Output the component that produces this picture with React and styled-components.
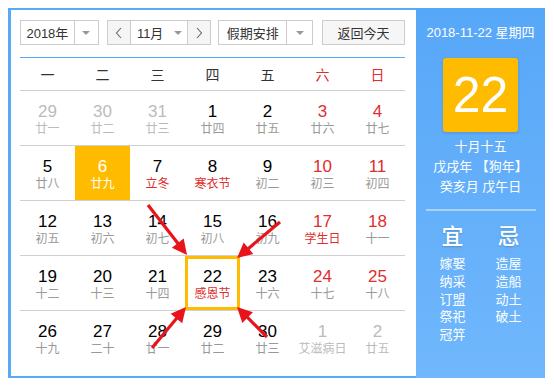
import styled, { createGlobalStyle } from "styled-components";

const GlobalStyle = createGlobalStyle`
  body {
    margin: 8px;
    font-family: "Liberation Sans", "Noto Sans CJK SC", sans-serif;
    background: #fff;
  }
`;

const RED = "#e02d2d";
const YELLOW = "#ffbb00";
const BLUE = "#5aa9f7";

const Wrapper = styled.div`
  position: relative;
  display: flex;
  width: 537px;
  height: 370px;
`;

const Main = styled.div`
  width: 408px;
  box-sizing: border-box;
  border: solid ${BLUE};
  border-width: 2px 0 2px 3px;
  padding: 10px 11px 0 9px;
  background: #fff;
`;

const Toolbar = styled.div`
  display: flex;
  height: 25px;
  padding-bottom: 12px;
  border-bottom: 1px solid ${BLUE};
`;

const Select = styled.div`
  display: flex;
  width: ${(p) => p.width}px;
  margin-right: ${(p) => p.gap || 0}px;
  box-sizing: border-box;
  border: 1px solid #ccc;
  background: #fff;
  font-size: 13px;
  color: #333;
`;

const SelectText = styled.div`
  flex: 1;
  display: flex;
  align-items: center;
  justify-content: center;
`;

const SelectArrow = styled.div`
  width: ${(p) => p.width || 23}px;
  display: flex;
  align-items: center;
  justify-content: center;
  border-left: ${(p) => (p.noLine ? "none" : "1px solid #ccc")};
  &::after {
    content: "";
    border-left: 4px solid transparent;
    border-right: 4px solid transparent;
    border-top: 4px solid #999;
  }
`;

const NavBtn = styled.div`
  width: 22px;
  display: flex;
  align-items: center;
  justify-content: center;
  background: #f5f5f5;
  border-${(p) => p.side}: 1px solid #ccc;
  color: #555;
`;

const TodayBtn = styled.div`
  width: 83px;
  box-sizing: border-box;
  border: 1px solid #ccc;
  background: #f6f6f6;
  display: flex;
  align-items: center;
  justify-content: center;
  font-size: 13px;
  color: #333;
`;

const Grid = styled.div`
  width: 385px;
`;

const HeadRow = styled.div`
  display: grid;
  grid-template-columns: repeat(7, 55px);
  height: 33px;
  box-sizing: border-box;
  border-bottom: 1px solid #d0d0d0;
`;

const HeadCell = styled.div`
  display: flex;
  align-items: center;
  justify-content: center;
  font-size: 14px;
  color: ${(p) => (p.weekend ? RED : "#333")};
`;

const Week = styled.div`
  display: grid;
  grid-template-columns: repeat(7, 55px);
  height: 55px;
  box-sizing: border-box;
  border-bottom: 1px solid #d0d0d0;
  &:last-child {
    border-bottom: none;
    height: 54px;
  }
`;

const Cell = styled.div`
  display: flex;
  flex-direction: column;
  align-items: center;
  justify-content: center;
  padding-top: 2px;
  box-sizing: border-box;
  background: ${(p) => (p.selected ? YELLOW : "transparent")};
  border: ${(p) => (p.today ? `3px solid ${YELLOW}` : "none")};
`;

const Num = styled.div`
  font-size: 17px;
  line-height: 19px;
  color: ${(p) =>
    p.selected ? "#fff" : p.other ? "#bbb" : p.weekend ? RED : "#000"};
`;

const Lunar = styled.div`
  font-size: 12px;
  line-height: 16px;
  color: ${(p) =>
    p.selected ? "#fff" : p.other ? "#bbb" : p.fest ? RED : "#999"};
`;

const Side = styled.div`
  width: 129px;
  height: 370px;
  background: linear-gradient(#57a7f8, #70b7fc);
  display: flex;
  flex-direction: column;
  align-items: center;
  color: #fff;
  padding-top: 16px;
  box-sizing: border-box;
`;

const SideDate = styled.div`
  font-size: 13px;
  line-height: 18px;
`;

const BigDay = styled.div`
  width: 75px;
  height: 74px;
  margin-top: 16px;
  border-radius: 3px;
  background: ${YELLOW};
  box-shadow: 0 1px 3px rgba(0, 0, 0, 0.15);
  display: flex;
  align-items: center;
  justify-content: center;
  font-size: 50px;
  font-family: "Liberation Sans", Arial, sans-serif;
`;

const LunarInfo = styled.div`
  margin-top: 5px;
  font-size: 13px;
  line-height: 20px;
  text-align: center;
`;

const Divider = styled.div`
  width: 110px;
  height: 2px;
  margin-top: 12px;
  background: rgba(255, 255, 255, 0.45);
`;

const Advice = styled.div`
  display: grid;
  grid-template-columns: 56px 56px;
  margin-top: 14px;
`;

const AdviceCol = styled.div`
  display: flex;
  flex-direction: column;
  align-items: center;
`;

const AdviceTitle = styled.div`
  font-size: 22px;
  line-height: 24px;
  font-weight: 500;
  margin-bottom: 6px;
  text-shadow: 0 1px 2px rgba(0, 0, 0, 0.2);
`;

const AdviceItem = styled.div`
  font-size: 13px;
  line-height: 17.8px;
`;

const Overlay = styled.svg`
  position: absolute;
  left: 0;
  top: 0;
  pointer-events: none;
`;

const weekdays = ["一", "二", "三", "四", "五", "六", "日"];

// [day, lunar, flags]
const weeks = [
  [["29", "廿一", "o"], ["30", "廿二", "o"], ["31", "廿三", "o"], ["1", "廿四"], ["2", "廿五"], ["3", "廿六"], ["4", "廿七"]],
  [["5", "廿八"], ["6", "廿九", "s"], ["7", "立冬", "f"], ["8", "寒衣节", "f"], ["9", "初二"], ["10", "初三"], ["11", "初四"]],
  [["12", "初五"], ["13", "初六"], ["14", "初七"], ["15", "初八"], ["16", "初九"], ["17", "学生日", "f"], ["18", "十一"]],
  [["19", "十二"], ["20", "十三"], ["21", "十四"], ["22", "感恩节", "ft"], ["23", "十六"], ["24", "十七"], ["25", "十八"]],
  [["26", "十九"], ["27", "二十"], ["28", "廿一"], ["29", "廿二"], ["30", "廿三"], ["1", "艾滋病日", "o"], ["2", "廿五", "o"]],
];

const arrows = [
  [148, 205, 187, 255],
  [280, 222, 237, 258],
  [152, 348, 186, 307],
  [267, 337, 237, 307],
];

function Arrow({ x1, y1, x2, y2 }) {
  const dx = x2 - x1;
  const dy = y2 - y1;
  const len = Math.hypot(dx, dy);
  const ux = dx / len;
  const uy = dy / len;
  const L = 15;
  const W = 7.5;
  const bx = x2 - ux * L;
  const by = y2 - uy * L;
  const pts = `${x2},${y2} ${bx - uy * W},${by + ux * W} ${bx + uy * W},${by - ux * W}`;
  return (
    <g fill="#e8141c" stroke="#e8141c">
      <line x1={x1} y1={y1} x2={bx + ux * 2} y2={by + uy * 2} strokeWidth="3.2" />
      <polygon points={pts} strokeWidth="0" />
    </g>
  );
}

function Chevron({ dir }) {
  return (
    <svg width="8" height="12" viewBox="0 0 8 12">
      <polyline
        points={dir === "l" ? "6,1 1.5,6 6,11" : "2,1 6.5,6 2,11"}
        fill="none"
        stroke="#666"
        strokeWidth="1.1"
      />
    </svg>
  );
}

function App() {
  return (
    <>
      <GlobalStyle />
      <Wrapper>
        <Main>
          <Toolbar>
            <Select width={79} gap={8}>
              <SelectText>2018年</SelectText>
              <SelectArrow />
            </Select>
            <Select width={105} gap={7}>
              <NavBtn side="right">
                <Chevron dir="l" />
              </NavBtn>
              <SelectText>11月</SelectText>
              <SelectArrow width={18} noLine />
              <NavBtn side="left">
                <Chevron dir="r" />
              </NavBtn>
            </Select>
            <Select width={95} gap={9}>
              <SelectText>假期安排</SelectText>
              <SelectArrow width={25} />
            </Select>
            <TodayBtn>返回今天</TodayBtn>
          </Toolbar>
          <Grid>
            <HeadRow>
              {weekdays.map((w, i) => (
                <HeadCell key={w} weekend={i > 4}>
                  {w}
                </HeadCell>
              ))}
            </HeadRow>
            {weeks.map((week, wi) => (
              <Week key={wi}>
                {week.map(([d, l, f = ""], i) => {
                  const other = f.includes("o");
                  const selected = f.includes("s");
                  return (
                    <Cell key={i} selected={selected} today={f.includes("t")}>
                      <Num other={other} selected={selected} weekend={i > 4}>
                        {d}
                      </Num>
                      <Lunar other={other} selected={selected} fest={f.includes("f")}>
                        {l}
                      </Lunar>
                    </Cell>
                  );
                })}
              </Week>
            ))}
          </Grid>
        </Main>
        <Side>
          <SideDate>2018-11-22 星期四</SideDate>
          <BigDay>22</BigDay>
          <LunarInfo>
            十月十五
            <br />
            戊戌年 【狗年】
            <br />
            癸亥月 戊午日
          </LunarInfo>
          <Divider />
          <Advice>
            <AdviceCol>
              <AdviceTitle>宜</AdviceTitle>
              {["嫁娶", "纳采", "订盟", "祭祀", "冠笄"].map((t) => (
                <AdviceItem key={t}>{t}</AdviceItem>
              ))}
            </AdviceCol>
            <AdviceCol>
              <AdviceTitle>忌</AdviceTitle>
              {["造屋", "造船", "动土", "破土"].map((t) => (
                <AdviceItem key={t}>{t}</AdviceItem>
              ))}
            </AdviceCol>
          </Advice>
        </Side>
        <Overlay width="537" height="370" viewBox="8 8 537 370">
          {arrows.map(([x1, y1, x2, y2], i) => (
            <Arrow key={i} x1={x1} y1={y1} x2={x2} y2={y2} />
          ))}
        </Overlay>
      </Wrapper>
    </>
  );
}

export default App;
